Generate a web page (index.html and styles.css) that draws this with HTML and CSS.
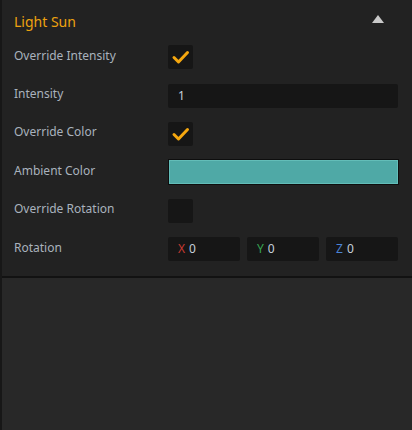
FILE: index.html
```html
<!DOCTYPE html>
<html lang="en">

<head>
    <meta charset="UTF-8">
    <meta name="viewport" content="width=device-width, initial-scale=1.0">
    <title>Light Sun</title>
    <link rel="stylesheet" href="styles.css">
</head>

<body>
    <div class="panel">
        <div class="section">
            <div class="section-header">
                <h2 class="section-title">Light Sun</h2>
                <span class="collapse-arrow"></span>
            </div>

            <div class="prop-row">
                <label class="prop-label">Override Intensity</label>
                <div class="prop-control">
                    <span class="checkbox checked">
                        <svg viewBox="0 0 25 24" width="25" height="24">
                            <path d="M6 12.5 L10.5 17 L19.5 7.5" fill="none" stroke="#f5a70f" stroke-width="3" stroke-linecap="round" stroke-linejoin="round" />
                        </svg>
                    </span>
                </div>
            </div>

            <div class="prop-row">
                <label class="prop-label">Intensity</label>
                <div class="prop-control">
                    <div class="text-input">1</div>
                </div>
            </div>

            <div class="prop-row">
                <label class="prop-label">Override Color</label>
                <div class="prop-control">
                    <span class="checkbox checked">
                        <svg viewBox="0 0 25 24" width="25" height="24">
                            <path d="M6 12.5 L10.5 17 L19.5 7.5" fill="none" stroke="#f5a70f" stroke-width="3" stroke-linecap="round" stroke-linejoin="round" />
                        </svg>
                    </span>
                </div>
            </div>

            <div class="prop-row">
                <label class="prop-label">Ambient Color</label>
                <div class="prop-control">
                    <div class="color-swatch"></div>
                </div>
            </div>

            <div class="prop-row">
                <label class="prop-label">Override Rotation</label>
                <div class="prop-control">
                    <span class="checkbox"></span>
                </div>
            </div>

            <div class="prop-row">
                <label class="prop-label">Rotation</label>
                <div class="prop-control vector">
                    <div class="text-input"><span class="axis axis-x">X</span>0</div>
                    <div class="text-input"><span class="axis axis-y">Y</span>0</div>
                    <div class="text-input"><span class="axis axis-z">Z</span>0</div>
                </div>
            </div>
        </div>
        <div class="empty-area"></div>
    </div>
</body>

</html>
```

FILE: styles.css
```css
* {
    margin: 0;
    padding: 0;
    box-sizing: border-box;
}

html,
body {
    height: 100%;
}

body {
    font-family: "Noto Sans", "Open Sans", sans-serif;
    background-color: #222222;
    overflow: hidden;
}

.panel {
    display: flex;
    flex-direction: column;
    height: 100%;
    border-left: 2px solid #171717;
}

.section {
    padding: 0 14px 8px 12px;
    background-color: #222222;
    border-bottom: 2px solid #121212;
}

.section-header {
    display: flex;
    align-items: center;
    justify-content: space-between;
    height: 38px;
    padding-top: 4px;
}

.section-title {
    font-size: 14px;
    font-weight: normal;
    color: #eea20f;
}

.collapse-arrow {
    width: 0;
    height: 0;
    margin-right: 14px;
    margin-top: -4px;
    border-left: 6px solid transparent;
    border-right: 6px solid transparent;
    border-bottom: 8px solid #c9c9c9;
}

.prop-row {
    display: flex;
    align-items: center;
    height: 38.4px;
}

.prop-label {
    width: 154px;
    font-size: 12px;
    color: #a9b2bd;
    margin-top: -4px;
}

.prop-control {
    flex: 1;
    display: flex;
}

.checkbox {
    display: block;
    width: 25px;
    height: 24px;
    background-color: #161616;
    border-radius: 2px;
}

.checkbox svg {
    display: block;
}

.text-input {
    flex: 1;
    height: 24px;
    line-height: 24px;
    padding-left: 10px;
    background-color: #161616;
    border-radius: 2px;
    font-size: 12px;
    color: #c5cfdb;
}

.vector {
    gap: 7px;
}

.axis {
    margin-right: 4px;
}

.axis-x {
    color: #c83a32;
}

.axis-y {
    color: #38a552;
}

.axis-z {
    color: #4b84d6;
}

.color-swatch {
    flex: 1;
    height: 26px;
    margin-right: -1px;
    background-color: #4fa9a6;
    border: 1px solid #0e0e0e;
    box-shadow: inset 0 0 0 1px #63bdb8;
}

.empty-area {
    flex: 1;
    background-color: #282828;
}
```
